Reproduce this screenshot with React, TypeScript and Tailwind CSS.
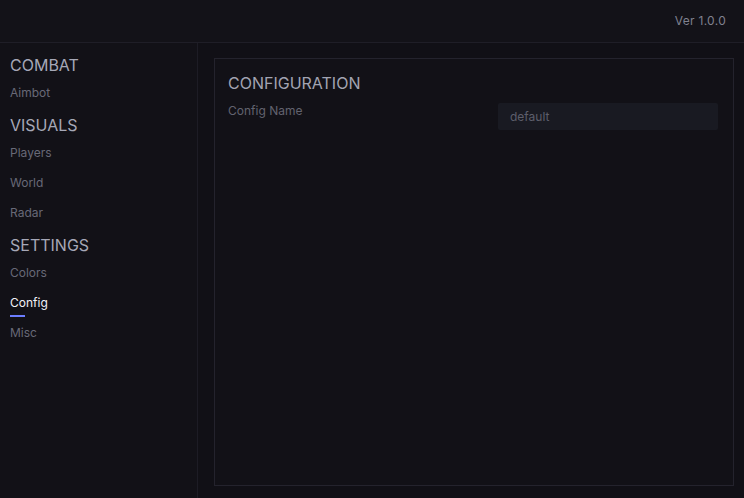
import React from 'react';

type NavSection = {
  title: string;
  items: string[];
};

const sections: NavSection[] = [
  { title: 'COMBAT', items: ['Aimbot'] },
  { title: 'VISUALS', items: ['Players', 'World', 'Radar'] },
  { title: 'SETTINGS', items: ['Colors', 'Config', 'Misc'] },
];

const active = 'Config';

export default function App() {
  return (
    <div
      className="flex h-[498px] w-[744px] flex-col overflow-hidden bg-[#111016]"
      style={{ fontFamily: 'Inter, "Noto Sans", sans-serif' }}
    >
      {/* Header */}
      <div className="flex h-[43px] shrink-0 items-center justify-end border-b border-[#1f1e27] bg-[#131218] pr-[18px]">
        <span className="text-[12px] tracking-[0.3px] text-[#80818f]">Ver 1.0.0</span>
      </div>

      <div className="flex min-h-0 flex-1">
        {/* Sidebar */}
        <div className="flex w-[198px] shrink-0 flex-col border-r border-[#1d1c25] bg-[#121117] pt-[5px]">
          {sections.map((section) => (
            <div key={section.title} className="flex flex-col">
              <div className="mt-[3px] flex h-[27px] items-center pl-[10px] text-[16px] text-[#a6a8b7]">
                {section.title}
              </div>
              {section.items.map((item) => (
                <div
                  key={item}
                  className={`relative flex h-[30px] items-center pl-[10px] text-[12px] ${
                    item === active ? 'text-[#f2f2f7]' : 'text-[#686977]'
                  }`}
                >
                  {item}
                  {item === active && (
                    <span className="absolute bottom-[1px] left-[10px] h-[2px] w-[15px] bg-[#6c7dff]" />
                  )}
                </div>
              ))}
            </div>
          ))}
        </div>

        {/* Main */}
        <div className="flex flex-1 flex-col pb-[12px] pl-[16px] pr-[10px] pt-[15px]">
          <div className="flex flex-1 flex-col border border-[#24232d] bg-[#121117] pl-[13px] pr-[15px] pt-[12px]">
            <div className="h-[24px] text-[16px] leading-[24px] text-[#a2a4b2]">CONFIGURATION</div>
            <div className="mt-[8px] flex items-start justify-between">
              <span className="text-[12px] leading-[16px] text-[#62636f]">Config Name</span>
              <div className="flex h-[27px] w-[220px] items-center rounded-[2px] bg-[#191a22] pl-[12px] text-[12px] text-[#5d5e6b]">
                default
              </div>
            </div>
          </div>
        </div>
      </div>
    </div>
  );
}
